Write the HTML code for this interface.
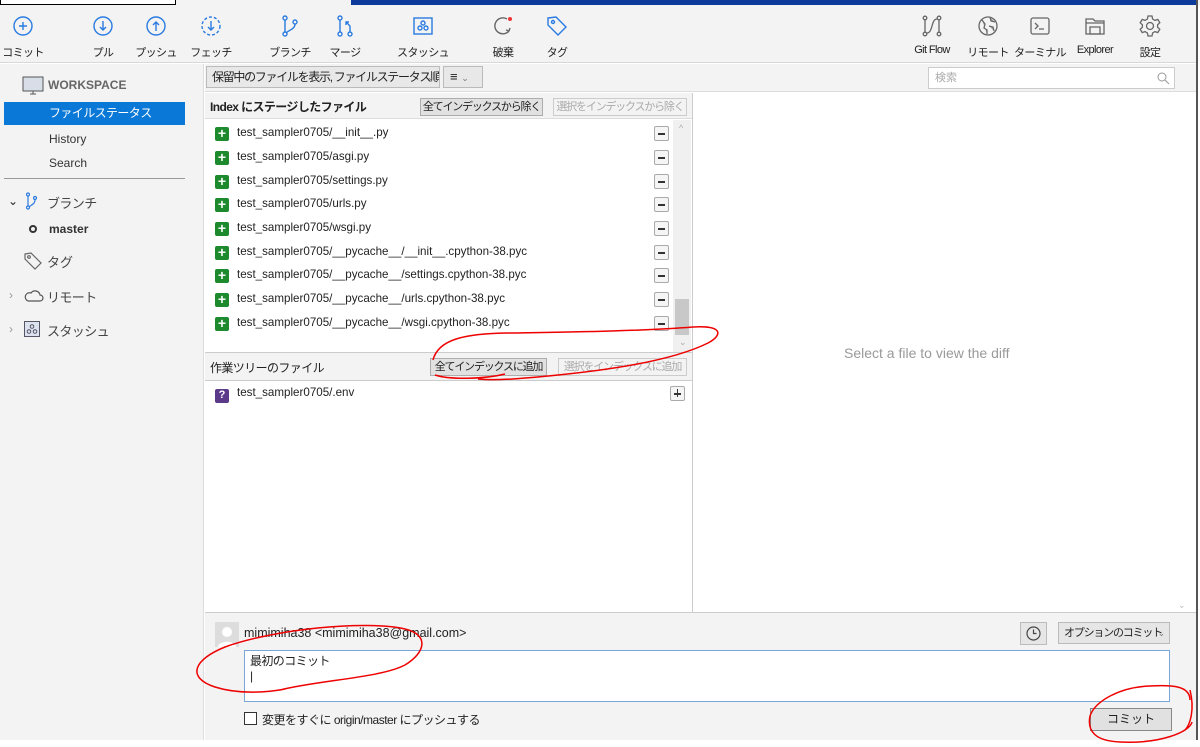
<!DOCTYPE html>
<html><head><meta charset="utf-8"><style>
*{box-sizing:border-box;margin:0;padding:0}
body{width:1200px;height:747px;background:#fff;font-family:"Liberation Sans","Noto Sans CJK JP",sans-serif;font-size:12px;color:#222;position:relative;overflow:hidden}
.a{position:absolute;white-space:nowrap}
.tb{left:0;top:5px;width:1196px;height:58px;background:#f3f3f3;border-bottom:1px solid #d8d8d8}
.ti{position:absolute;top:9px;width:70px;margin-left:-35px;text-align:center;font-size:11px;color:#222;letter-spacing:-0.6px;white-space:nowrap}
.ti svg{display:block;margin:0 auto 6px;width:24px;height:24px}
.side{left:0;top:64px;width:204px;height:676px;background:#f3f3f3;border-right:1px solid #ddd}
.btn{position:absolute;height:18px;border:1px solid #adadad;background:#e1e1e1;font-size:11px;text-align:center;line-height:16px;white-space:nowrap;overflow:hidden;letter-spacing:-1.2px}
.dis{color:#aaa;background:#f3f3f3;border-color:#ccc}
.row{position:absolute;left:215px;height:20px;font-size:11.6px;line-height:18px;white-space:nowrap}
.plus{display:inline-block;width:14px;height:14px;background:#1e8a2e;border-radius:2px;color:#fff;font-weight:bold;text-align:center;line-height:13px;font-size:14px;vertical-align:-2px;margin-right:8px}
.mb{position:absolute;left:654px;width:15px;height:15px;border:1px solid #aaa;background:#f5f5f5;border-radius:2px}
.mb:after{content:"";position:absolute;left:3px;top:6px;width:7px;height:1.5px;background:#333}
</style></head><body>
<div class="a" style="left:0;top:0;width:1200px;height:5px;background:#f3f3f3"></div>
<div class="a" style="left:0;top:0;width:176px;height:5px;background:#fff;border:1px solid #000;border-top:none"></div>
<div class="a" style="left:351px;top:0;width:845px;height:5px;background:#0b3a9a"></div>
<div class="a tb">
<div class="ti" style="left:23px"><svg viewBox="0 0 24 24" fill="none" stroke="#2a7be0" stroke-width="1.4"><circle cx="12" cy="12" r="9"/><path d="M12 8v8M8 12h8"/></svg>コミット</div>
<div class="ti" style="left:103px"><svg viewBox="0 0 24 24" fill="none" stroke="#2a7be0" stroke-width="1.4"><circle cx="12" cy="12" r="9"/><path d="M12 7v9M9 13l3 3 3-3"/></svg>プル</div>
<div class="ti" style="left:156px"><svg viewBox="0 0 24 24" fill="none" stroke="#2a7be0" stroke-width="1.4"><circle cx="12" cy="12" r="9"/><path d="M12 17V8M9 11l3-3 3 3"/></svg>プッシュ</div>
<div class="ti" style="left:211px"><svg viewBox="0 0 24 24" fill="none" stroke="#2a7be0" stroke-width="1.4" ><circle cx="12" cy="12" r="9" stroke-dasharray="3 2"/><path d="M12 7v9M9 13l3 3 3-3"/></svg>フェッチ</div>
<div class="ti" style="left:290px"><svg viewBox="0 0 24 24" fill="none" stroke="#2a7be0" stroke-width="1.4"><circle cx="7" cy="4" r="2"/><circle cx="7" cy="20" r="2"/><circle cx="17" cy="8" r="2"/><path d="M7 6v12M17 10c0 5-6 6-9 9"/></svg>ブランチ</div>
<div class="ti" style="left:345px"><svg viewBox="0 0 24 24" fill="none" stroke="#2a7be0" stroke-width="1.4"><circle cx="7" cy="4" r="2"/><circle cx="7" cy="20" r="2"/><circle cx="17" cy="20" r="2"/><path d="M7 6v12M17 18v-6l-4-4M13 11V8h3"/></svg>マージ</div>
<div class="ti" style="left:423px"><svg viewBox="0 0 24 24" fill="none" stroke="#2a7be0" stroke-width="1.4"><rect x="3" y="4" width="18" height="16"/><circle cx="12" cy="9" r="2"/><circle cx="9" cy="14" r="2"/><circle cx="15" cy="14" r="2"/></svg>スタッシュ</div>
<div class="ti" style="left:503px"><svg viewBox="0 0 24 24" fill="none" stroke="#666" stroke-width="1.4"><path d="M18 17A8 8 0 1 1 16 5"/><path d="M18 17l-3-1M18 17l1-3"/><circle cx="19" cy="5" r="2" fill="#e33" stroke="none"/></svg>破棄</div>
<div class="ti" style="left:557px"><svg viewBox="0 0 24 24" fill="none" stroke="#2a7be0" stroke-width="1.4"><path d="M3 4l8-1 10 10-8 8L3 11z"/><circle cx="8" cy="8" r="1.5"/></svg>タグ</div>
<div class="ti" style="left:932px"><svg viewBox="0 0 24 24" fill="none" stroke="#666" stroke-width="1.3"><circle cx="5" cy="4" r="1.8"/><circle cx="5" cy="20" r="1.8"/><circle cx="19" cy="4" r="1.8"/><circle cx="19" cy="20" r="1.8"/><path d="M5 6v12M19 6v12M7 19c6 0 4-14 10-14"/></svg>Git Flow</div>
<div class="ti" style="left:988px"><svg viewBox="0 0 24 24" fill="none" stroke="#666" stroke-width="1.3"><circle cx="12" cy="12" r="9"/><path d="M6 6l3 4-1 4 3 2v4M14 3l1 4 4 1M13 12l4 1 1 4" fill="#aaa"/></svg>リモート</div>
<div class="ti" style="left:1040px"><svg viewBox="0 0 24 24" fill="none" stroke="#666" stroke-width="1.3"><rect x="3" y="4" width="18" height="16" rx="2"/><path d="M7 9l3 3-3 3M11 15h5"/></svg>ターミナル</div>
<div class="ti" style="left:1095px"><svg viewBox="0 0 24 24" fill="none" stroke="#666" stroke-width="1.3"><path d="M3 5h7l2 2h9v13H3z"/><path d="M3 9h18M7 13h10v7H7z"/></svg>Explorer</div>
<div class="ti" style="left:1150px"><svg viewBox="0 0 24 24" fill="none" stroke="#666" stroke-width="1.3"><circle cx="12" cy="12" r="3.5"/><path d="M10 2h4l.6 3 2.4 1.4 2.8-1 2 3.4-2.2 2 0 2.4 2.2 2-2 3.4-2.8-1L14.6 19 14 22h-4l-.6-3L7 17.6l-2.8 1-2-3.4 2.2-2V10.8L2.2 8.8l2-3.4 2.8 1L9.4 5z"/></svg>設定</div>
</div>
<div class="a" style="left:1196px;top:0;width:2px;height:740px;background:#555"></div>

<div class="a side">
<svg class="a" style="left:22px;top:12px" width="22" height="20" viewBox="0 0 22 20" fill="#d8dde8" stroke="#555"><rect x="1" y="1" width="20" height="14"/><path d="M8 18h6M11 15v3" fill="none"/></svg>
<div class="a" style="left:48px;top:14px;font-size:12px;color:#666;font-weight:bold">WORKSPACE</div>
<div class="a" style="left:4px;top:38px;width:181px;height:23px;background:#0a78d7;color:#fff;padding-left:45px;line-height:23px;letter-spacing:-0.6px">ファイルステータス</div>
<div class="a" style="left:49px;top:68px;color:#333">History</div>
<div class="a" style="left:49px;top:92px;color:#333">Search</div>
<div class="a" style="left:4px;top:114px;width:181px;height:1px;background:#999"></div>
<div class="a" style="left:8px;top:130px;font-size:12px">⌄</div>
<svg class="a" style="left:24px;top:128px" width="14" height="18" viewBox="0 0 14 18" fill="none" stroke="#2a7be0" stroke-width="1.2"><circle cx="4" cy="2.5" r="1.5"/><circle cx="4" cy="15.5" r="1.5"/><circle cx="11" cy="6" r="1.5"/><path d="M4 4v10M11 8c0 4-4 5-6 7"/></svg>
<div class="a" style="left:47px;top:129px;font-size:13px;color:#444;letter-spacing:-0.6px">ブランチ</div>
<div class="a" style="left:29px;top:161px;width:8px;height:8px;border:2px solid #333;border-radius:50%"></div>
<div class="a" style="left:49px;top:158px;font-weight:bold;color:#333">master</div>
<svg class="a" style="left:23px;top:187px" width="20" height="20" viewBox="0 0 20 20" fill="none" stroke="#666" stroke-width="1.2"><path d="M2 3l6-1 10 10-6 6L2 8z"/><circle cx="6" cy="6" r="1.3"/></svg>
<div class="a" style="left:47px;top:188px;font-size:13px;color:#444">タグ</div>
<div class="a" style="left:9px;top:224px;color:#999">›</div>
<svg class="a" style="left:24px;top:225px" width="20" height="14" viewBox="0 0 20 14" fill="none" stroke="#555" stroke-width="1.2"><path d="M4 12h12a3 3 0 0 0 0-6 5 5 0 0 0-9-2A4 4 0 0 0 4 12z"/></svg>
<div class="a" style="left:47px;top:223px;font-size:13px;color:#444;letter-spacing:-0.6px">リモート</div>
<div class="a" style="left:9px;top:258px;color:#999">›</div>
<svg class="a" style="left:24px;top:257px" width="16" height="16" viewBox="0 0 16 16" fill="none" stroke="#556" stroke-width="1"><rect x=".5" y=".5" width="15" height="15" fill="#dde3ee"/><circle cx="8" cy="5.5" r="1.8"/><circle cx="5" cy="10.5" r="1.8"/><circle cx="11" cy="10.5" r="1.8"/></svg>
<div class="a" style="left:47px;top:257px;font-size:13px;color:#444;letter-spacing:-0.6px">スタッシュ</div>
</div>

<!-- filter bar -->
<div class="a" style="left:205px;top:64px;width:991px;height:28px;background:#f3f3f3;border-bottom:1px solid #ddd"></div>
<div class="a" style="left:206px;top:66px;width:234px;height:22px;border:1px solid #bbb;background:#e8e8e8;line-height:20px;padding-left:5px;font-size:12px;letter-spacing:-1.3px;overflow:hidden">保留中のファイルを表示, ファイルステータス順<span style="position:absolute;right:6px;color:#777;font-size:9px">⌄</span></div>
<div class="a" style="left:443px;top:66px;width:40px;height:22px;border:1px solid #bbb;background:#e8e8e8;line-height:20px;padding-left:6px;font-size:13px">≡ <span style="font-size:9px;color:#777">⌄</span></div>
<div class="a" style="left:928px;top:67px;width:247px;height:22px;border:1px solid #ccc;background:#fff;color:#aaa;padding-left:6px;line-height:20px;font-size:11px">検索<svg style="position:absolute;right:4px;top:4px" width="13" height="13" viewBox="0 0 13 13" fill="none" stroke="#999"><circle cx="5" cy="5" r="4"/><path d="M8 8l4 4"/></svg></div>

<!-- staged pane -->
<div class="a" style="left:205px;top:93px;width:488px;height:26px;background:#f3f3f3;border-bottom:1px solid #ddd"></div>
<div class="a" style="left:210px;top:98px;font-weight:bold;font-size:12px;letter-spacing:-0.6px">Index にステージしたファイル</div>
<div class="btn" style="left:420px;top:98px;width:123px">全てインデックスから除く</div>
<div class="btn dis" style="left:553px;top:98px;width:134px">選択をインデックスから除く</div>
<div class="a" style="left:692px;top:93px;width:1px;height:520px;background:#ccc"></div>
<div class="a" style="left:673px;top:120px;width:18px;height:232px;background:#f0f0f0"></div>
<div class="a" style="left:675px;top:299px;width:14px;height:36px;background:#c8c8c8"></div>
<div class="a" style="left:679px;top:123px;color:#aaa;font-size:9px">^</div>
<div class="a" style="left:679px;top:337px;color:#aaa;font-size:9px">⌄</div>

<div class="row" style="top:124px"><span class="plus">+</span>test_sampler0705/__init__.py</div><div class="mb" style="top:126px"></div>
<div class="row" style="top:148px"><span class="plus">+</span>test_sampler0705/asgi.py</div><div class="mb" style="top:150px"></div>
<div class="row" style="top:172px"><span class="plus">+</span>test_sampler0705/settings.py</div><div class="mb" style="top:174px"></div>
<div class="row" style="top:195px"><span class="plus">+</span>test_sampler0705/urls.py</div><div class="mb" style="top:197px"></div>
<div class="row" style="top:219px"><span class="plus">+</span>test_sampler0705/wsgi.py</div><div class="mb" style="top:221px"></div>
<div class="row" style="top:243px"><span class="plus">+</span>test_sampler0705/__pycache__/__init__.cpython-38.pyc</div><div class="mb" style="top:245px"></div>
<div class="row" style="top:266px"><span class="plus">+</span>test_sampler0705/__pycache__/settings.cpython-38.pyc</div><div class="mb" style="top:268px"></div>
<div class="row" style="top:290px"><span class="plus">+</span>test_sampler0705/__pycache__/urls.cpython-38.pyc</div><div class="mb" style="top:292px"></div>
<div class="row" style="top:314px"><span class="plus">+</span>test_sampler0705/__pycache__/wsgi.cpython-38.pyc</div><div class="mb" style="top:316px"></div>

<!-- working tree -->
<div class="a" style="left:205px;top:352px;width:487px;height:29px;background:#f3f3f3;border-top:1px solid #ccc;border-bottom:1px solid #ccc"></div>
<div class="a" style="left:210px;top:359px;font-size:12px;letter-spacing:-0.6px">作業ツリーのファイル</div>
<div class="btn" style="left:430px;top:358px;width:117px">全てインデックスに追加</div>
<div class="btn dis" style="left:558px;top:358px;width:129px">選択をインデックスに追加</div>
<div class="row" style="top:384px"><span class="plus" style="background:#5b3a8a;font-size:11px">?</span>test_sampler0705/.env</div>
<div class="mb" style="left:670px;top:386px"></div><div class="a" style="left:676.5px;top:389px;width:1.5px;height:8px;background:#333"></div>

<div class="a" style="left:844px;top:345px;font-size:14px;color:#999">Select a file to view the diff</div>
<div class="a" style="left:1178px;top:600px;color:#bbb;font-size:9px">⌄</div>

<!-- commit area -->
<div class="a" style="left:205px;top:612px;width:991px;height:128px;background:#f3f3f3;border-top:1px solid #ccc"></div>
<svg class="a" style="left:215px;top:622px" width="24" height="25" viewBox="0 0 24 25"><rect width="24" height="25" fill="#ddd"/><circle cx="12" cy="10" r="5" fill="#fff"/><path d="M3 25c0-7 18-7 18 0z" fill="#fff"/></svg>
<div class="a" style="left:244px;top:626px;font-size:12.5px">mimimiha38 &lt;mimimiha38@gmail.com&gt;</div>
<div class="a" style="left:1020px;top:622px;width:27px;height:23px;border:1px solid #bbb;background:#e6e6e6"><svg style="position:absolute;left:5px;top:3px" width="15" height="15" viewBox="0 0 15 15" fill="none" stroke="#444" stroke-width="1.2"><circle cx="7.5" cy="7.5" r="6.5"/><path d="M7.5 3.5v4h3"/></svg></div>
<div class="a" style="left:1058px;top:622px;width:112px;height:22px;border:1px solid #bbb;background:#e6e6e6;font-size:11px;line-height:20px;padding-left:5px;letter-spacing:-1.2px;overflow:hidden">オプションのコミット<span style="position:absolute;right:5px;color:#777;font-size:9px">⌄</span></div>
<div class="a" style="left:244px;top:650px;width:926px;height:52px;background:#fff;border:1px solid #7aa7d9;padding:3px 5px;font-size:12px;line-height:15px;letter-spacing:-0.6px">最初のコミット<br>|</div>
<div class="a" style="left:244px;top:712px;width:13px;height:13px;border:1px solid #333;background:#fff"></div>
<div class="a" style="left:262px;top:711px;font-size:12px;letter-spacing:-0.5px">変更をすぐに origin/master にプッシュする</div>
<div class="a" style="left:1090px;top:708px;width:82px;height:23px;border:1px solid #888;background:#e1e1e1;text-align:center;line-height:21px;font-size:12px">コミット</div>

<!-- red annotations -->
<svg class="a" style="left:0;top:0" width="1200" height="747" fill="none" stroke="#e00" stroke-width="1.5">
<path d="M433 360c5-20 30-27 80-27 60-1 130-2 180-6 30-2 30 8 15 16-30 15-80 25-150 32-30 3-60 6-80 4"/>
<path d="M435 375c15 5 50 4 70-1"/>
<path d="M280 690c40-10 100-12 125-25 20-12 25-30 0-36-40-9-130 0-180 18-30 12-40 30-10 40 25 8 55 5 70 2"/>
<path d="M1190 700c0-15-20-15-40-14-30 1-55 15-60 30-3 15 5 25 30 26 40 2 70-10 72-20"/>
<path d="M1190 690c5 20 0 35-5 40"/>
</svg>
</body></html>
